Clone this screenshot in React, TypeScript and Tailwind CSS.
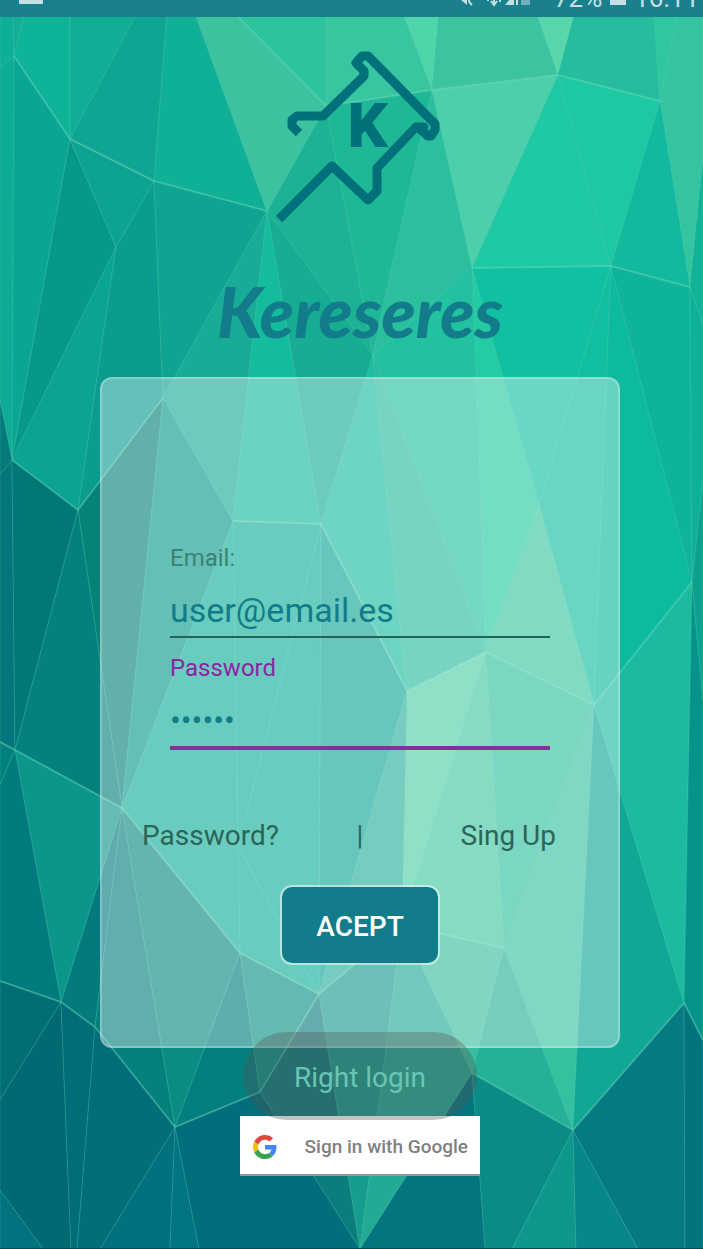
import React from "react";

type Facet = [points: string, fill: string];

const facets: Facet[] = [
  ["0,0 13,0 14,56 0,68", "#0fae97"],
  ["0,68 14,56 12,460 0,400", "#0eab96"],
  ["13,0 27,0 14,56", "#11ad95"],
  ["27,0 70,0 70,139 14,56", "#0fb398"],
  ["14,56 70,139 12,460", "#0ba593"],
  ["70,139 116,247 12,460", "#07988c"],
  ["116,247 78,510 12,460", "#0ba391"],
  ["116,247 154,181 163,398 78,510", "#0a9c8f"],
  ["70,139 154,181 116,247", "#0da391"],
  ["70,0 144,0 70,139", "#10ae95"],
  ["70,139 144,0 168,0 154,181", "#0ea592"],
  ["154,181 168,0 190,0 267,211", "#10b096"],
  ["154,181 267,211 163,398", "#0ea491"],
  ["267,211 233,521 163,398", "#18ac96"],
  ["267,211 321,524 233,521", "#15bb9d"],
  ["267,211 373,355 321,524", "#17ad93"],
  ["267,211 326,106 373,355", "#1db294"],
  ["190,0 222,0 326,106 267,211", "#3dc2a0"],
  ["222,0 326,0 326,106", "#2cc49e"],
  ["326,0 398,0 432,90 326,106", "#38c6a1"],
  ["326,106 432,90 390,275 373,355", "#1fb896"],
  ["432,90 472,268 373,355 390,275", "#2bbf9e"],
  ["398,0 440,0 432,90", "#50d4aa"],
  ["440,0 532,0 558,75 432,90", "#3ec3a0"],
  ["432,90 558,75 472,268", "#4dcfab"],
  ["532,0 578,0 558,75", "#58d7ab"],
  ["578,0 653,0 660,101 558,75", "#25bd9e"],
  ["558,75 611,266 472,268", "#1fc9a3"],
  ["558,75 660,101 611,266", "#1dc8a2"],
  ["653,0 680,0 660,101", "#30c6a0"],
  ["680,0 703,0 703,157 690,287 660,101", "#34c5a0"],
  ["660,101 690,287 611,266", "#12b99e"],
  ["690,287 703,157 703,325", "#10b298"],
  ["472,268 611,266 539,505", "#10c0a1"],
  ["472,268 539,505 486,652", "#24cba3"],
  ["472,268 486,652 373,355", "#22c1a0"],
  ["611,266 594,705 539,505", "#10bf9f"],
  ["611,266 692,582 594,705", "#0dba9e"],
  ["611,266 690,287 692,582", "#0fb398"],
  ["690,287 703,325 703,480 692,582", "#0eb097"],
  ["373,355 407,691 321,524", "#1cbda0"],
  ["373,355 486,652 407,691", "#29ba9f"],
  ["539,505 594,705 486,652", "#38c69f"],
  ["407,691 486,652 402,925", "#4dcea6"],
  ["486,652 504,948 402,925", "#40c8a1"],
  ["486,652 594,705 504,948", "#2fbf9f"],
  ["594,705 573,1130 504,948", "#34c1a0"],
  ["594,705 684,1003 573,1130", "#10a795"],
  ["594,705 692,582 684,1003", "#1cbba0"],
  ["692,582 703,700 703,1040 684,1003", "#06948a"],
  ["692,582 703,480 703,700", "#0ca18f"],
  ["163,398 122,808 78,510", "#068277"],
  ["163,398 233,521 122,808", "#0b9c8d"],
  ["233,521 321,524 319,994 240,953 122,808", "#10b099"],
  ["321,524 407,691 319,994", "#10a696"],
  ["407,691 402,925 319,994", "#27b09a"],
  ["0,400 12,460 0,475", "#047a7a"],
  ["0,475 12,460 15,750 0,742", "#02767a"],
  ["12,460 78,510 15,750", "#027777"],
  ["78,510 122,808 15,750", "#04817d"],
  ["15,750 122,808 61,1002", "#0a968b"],
  ["0,742 15,750 0,785", "#03817f"],
  ["0,785 15,750 61,1002 0,981", "#027b7e"],
  ["122,808 95,1027 61,1002", "#037b7d"],
  ["122,808 175,1127 95,1027", "#04807d"],
  ["122,808 240,953 175,1127", "#0a8b83"],
  ["240,953 260,1092 175,1127", "#037f7f"],
  ["240,953 319,994 260,1092", "#0b9286"],
  ["319,994 360,1249 260,1092", "#0b7d7c"],
  ["319,994 402,925 360,1249", "#189c8d"],
  ["402,925 472,1073 360,1249", "#22aa94"],
  ["402,925 504,948 472,1073", "#36bf9e"],
  ["504,948 573,1130 472,1073", "#27b098"],
  ["472,1073 573,1130 512,1249 485,1249", "#0b8b85"],
  ["472,1073 485,1249 360,1249", "#03757e"],
  ["573,1130 576,1249 512,1249", "#10978c"],
  ["573,1130 638,1249 576,1249", "#08868a"],
  ["573,1130 684,1003 685,1249 638,1249", "#067a82"],
  ["684,1003 703,1040 703,1249 685,1249", "#03747d"],
  ["0,981 61,1002 0,1100", "#016d74"],
  ["0,1100 61,1002 71,1249 43,1249 0,1190", "#016974"],
  ["0,1190 43,1249 0,1249", "#02727f"],
  ["61,1002 95,1027 77,1249 71,1249", "#016d78"],
  ["95,1027 175,1127 100,1249 77,1249", "#016e7a"],
  ["175,1127 170,1249 100,1249", "#02717e"],
  ["175,1127 199,1249 170,1249", "#027583"],
  ["175,1127 260,1092 360,1249 199,1249", "#016e7b"],
];

const ridges = [
  "14,56 70,139 154,181 267,211",
  "222,0 326,106 432,90 558,75 660,101",
  "472,268 611,266 690,287",
  "12,460 78,510 163,398",
  "233,521 321,524 407,691 486,652 594,705 692,582",
  "0,742 15,750 122,808 240,953 319,994 402,925 504,948",
  "0,981 61,1002 95,1027 175,1127 260,1092 319,994",
  "472,1073 573,1130 684,1003 703,1040",
];

function Backdrop() {
  return (
    <svg
      className="absolute inset-0 -z-10 h-full w-full"
      viewBox="0 0 703 1249"
      preserveAspectRatio="none"
      aria-hidden="true"
    >
      <rect width="703" height="1249" fill="#0a9c8f" />
      {facets.map(([points, fill]) => (
        <polygon
          key={points}
          points={points}
          fill={fill}
          stroke="#7fe0c4"
          strokeOpacity="0.2"
          strokeWidth="1"
        />
      ))}
      {ridges.map((points) => (
        <polyline
          key={points}
          points={points}
          fill="none"
          stroke="#7fe0c4"
          strokeOpacity="0.3"
          strokeWidth="2"
        />
      ))}
      <path
        d="M233 521L240 953M321 524L245 820M240 850L319 994"
        fill="none"
        stroke="#7fe0c4"
        strokeOpacity="0.25"
      />
      <path d="M0 1248.500H703" stroke="#024b55" />
    </svg>
  );
}

function StatusBar() {
  return (
    <header className="flex h-[17px] items-end justify-between overflow-hidden bg-[#1a808d] pr-1 pb-[7px] pl-[19px] text-[26px] leading-6 text-[#c5e0e5]">
      <svg className="mb-1 h-6 w-6 shrink-0" viewBox="0 0 24 24" aria-hidden="true">
        <rect y="2" width="24" height="20" rx="1" fill="currentColor" />
      </svg>
      <div className="flex items-end gap-2">
        <svg className="h-6 w-[90px] shrink-0" viewBox="0 0 90 24" fill="none" aria-hidden="true">
          <path d="M0 12H5L11 5V19L5 14Z" fill="currentColor" />
          <path d="M17 7C11 11 12 16 16 19" stroke="currentColor" strokeWidth="2" />
          <path d="M31 14H33M35 15L38 19L41 15M38 8V19M44 8V16" stroke="currentColor" strokeWidth="2" />
          <path d="M49 19L58 8V19ZM60 6H62V19H60Z" fill="currentColor" />
          <path d="M65 6H74V19H65Z" fill="currentColor" opacity="0.5" />
        </svg>
        <span>72%</span>
        <svg className="h-6 w-4 shrink-0" viewBox="0 0 16 24" aria-hidden="true">
          <path d="M0 2H16V19H0Z" fill="currentColor" />
        </svg>
        <span>16:11</span>
      </div>
    </header>
  );
}

function HammerLogo() {
  return (
    <svg className="h-44 w-[168px]" viewBox="276 48 168 176" role="img" aria-label="Kereseres logo">
      <path
        d="M299 132L292 125V119L297 115H323L364 75V70L356 62L362 55H368L435 123V129L431 135H428L421 129L424 126H416L377 167V190L368 199L332 165L279 218"
        fill="none"
        stroke="#00707b"
        strokeWidth="9"
        strokeLinejoin="round"
      />
      <text
        x="367"
        y="145"
        textAnchor="middle"
        fill="#00707b"
        stroke="#00707b"
        strokeWidth="2"
        className="font-[Roboto,sans-serif] text-[60px] font-bold"
      >
        K
      </text>
    </svg>
  );
}

function GoogleMark() {
  return (
    <svg className="h-6 w-6 shrink-0" viewBox="0 0 48 48" aria-hidden="true">
      <path fill="#dc4a3d" d="M24 9.500c3.540 0 6.710 1.220 9.210 3.600l6.850-6.850C35.900 2.380 30.470 0 24 0 14.620 0 6.510 5.380 2.560 13.220l7.980 6.190C12.430 13.720 17.740 9.500 24 9.500z" />
      <path fill="#4285f4" d="M46.980 24.550c0-1.570-.15-3.090-.38-4.550H24v9.020h12.940c-.58 2.960-2.260 5.480-4.780 7.180l7.730 6c4.510-4.180 7.090-10.360 7.090-17.650z" />
      <path fill="#f9bb12" d="M10.530 28.590c-.48-1.450-.76-2.990-.76-4.590s.27-3.140.76-4.590l-7.980-6.190C.92 16.460 0 20.120 0 24c0 3.880.92 7.540 2.560 10.780l7.970-6.190z" />
      <path fill="#35a352" d="M24 48c6.480 0 11.930-2.130 15.890-5.810l-7.730-6c-2.150 1.450-4.920 2.300-8.160 2.300-6.260 0-11.570-4.220-13.470-9.910l-7.980 6.190C6.510 42.620 14.620 48 24 48z" />
    </svg>
  );
}

export default function App() {
  return (
    <div className="relative isolate min-h-screen overflow-hidden font-[Roboto,sans-serif]">
      <Backdrop />
      <StatusBar />
      <main className="flex flex-col items-center pt-8 pb-16 pl-[17px]">
        <HammerLogo />
        <h1 className="flex h-38 items-center pt-5 font-[Lato,sans-serif] text-[70px] leading-none font-black text-[#127c8a] italic">
          Kereseres
        </h1>

        <form
          className="flex w-full max-w-[520px] flex-col items-center rounded-xl border-2 border-white/25 bg-white/37 px-10 pt-[165px] pb-[81px]"
          onSubmit={(event) => event.preventDefault()}
        >
          <div className="flex w-full max-w-[380px] flex-col">
            <label htmlFor="email" className="text-2xl leading-7 text-[#3b8275]">
              Email:
            </label>
            <input
              id="email"
              type="email"
              defaultValue="user@email.es"
              className="mt-3 h-[54px] w-full border-b-2 border-[#216558] bg-transparent text-[34px] text-[#127c8a] outline-none"
            />
            <label htmlFor="password" className="mt-4 text-2xl leading-7 text-[#9022a5]">
              Password
            </label>
            <input
              id="password"
              type="password"
              defaultValue="secret"
              className="mt-3 h-14 w-full border-b-4 border-[#85309a] bg-transparent text-[32px] text-[#127c8a] outline-none"
            />
          </div>

          <nav className="mt-[68px] grid w-full grid-cols-[1fr_auto_1fr] pr-[22px] pl-0 text-[28px] leading-9 text-[#2c6458]">
            <a href="#password">Password?</a>
            <span className="pl-[22px]">|</span>
            <a href="#signup" className="text-right">
              Sing Up
            </a>
          </nav>

          <button
            type="submit"
            className="mt-[31px] h-20 w-40 rounded-xl border-2 border-white/50 bg-[#127c8a] bg-clip-padding pt-1 text-[28px] font-medium text-white"
          >
            ACEPT
          </button>
        </form>

        <div className="relative mt-[68px]">
          <button
            type="button"
            className="flex h-15 w-60 items-center justify-between border-b-2 border-[#989898] bg-white pt-1 pr-3 pl-[13px] text-[19px] font-medium text-[#808080]"
          >
            <GoogleMark />
            <span>Sign in with Google</span>
          </button>
          <div
            role="status"
            className="absolute bottom-14 left-1/2 flex h-[88px] w-[234px] -translate-x-1/2 items-center justify-center rounded-full bg-[#555]/35 pt-1 text-[28px] whitespace-nowrap text-[#6bc5b5]"
          >
            Right login
          </div>
        </div>
      </main>
    </div>
  );
}
